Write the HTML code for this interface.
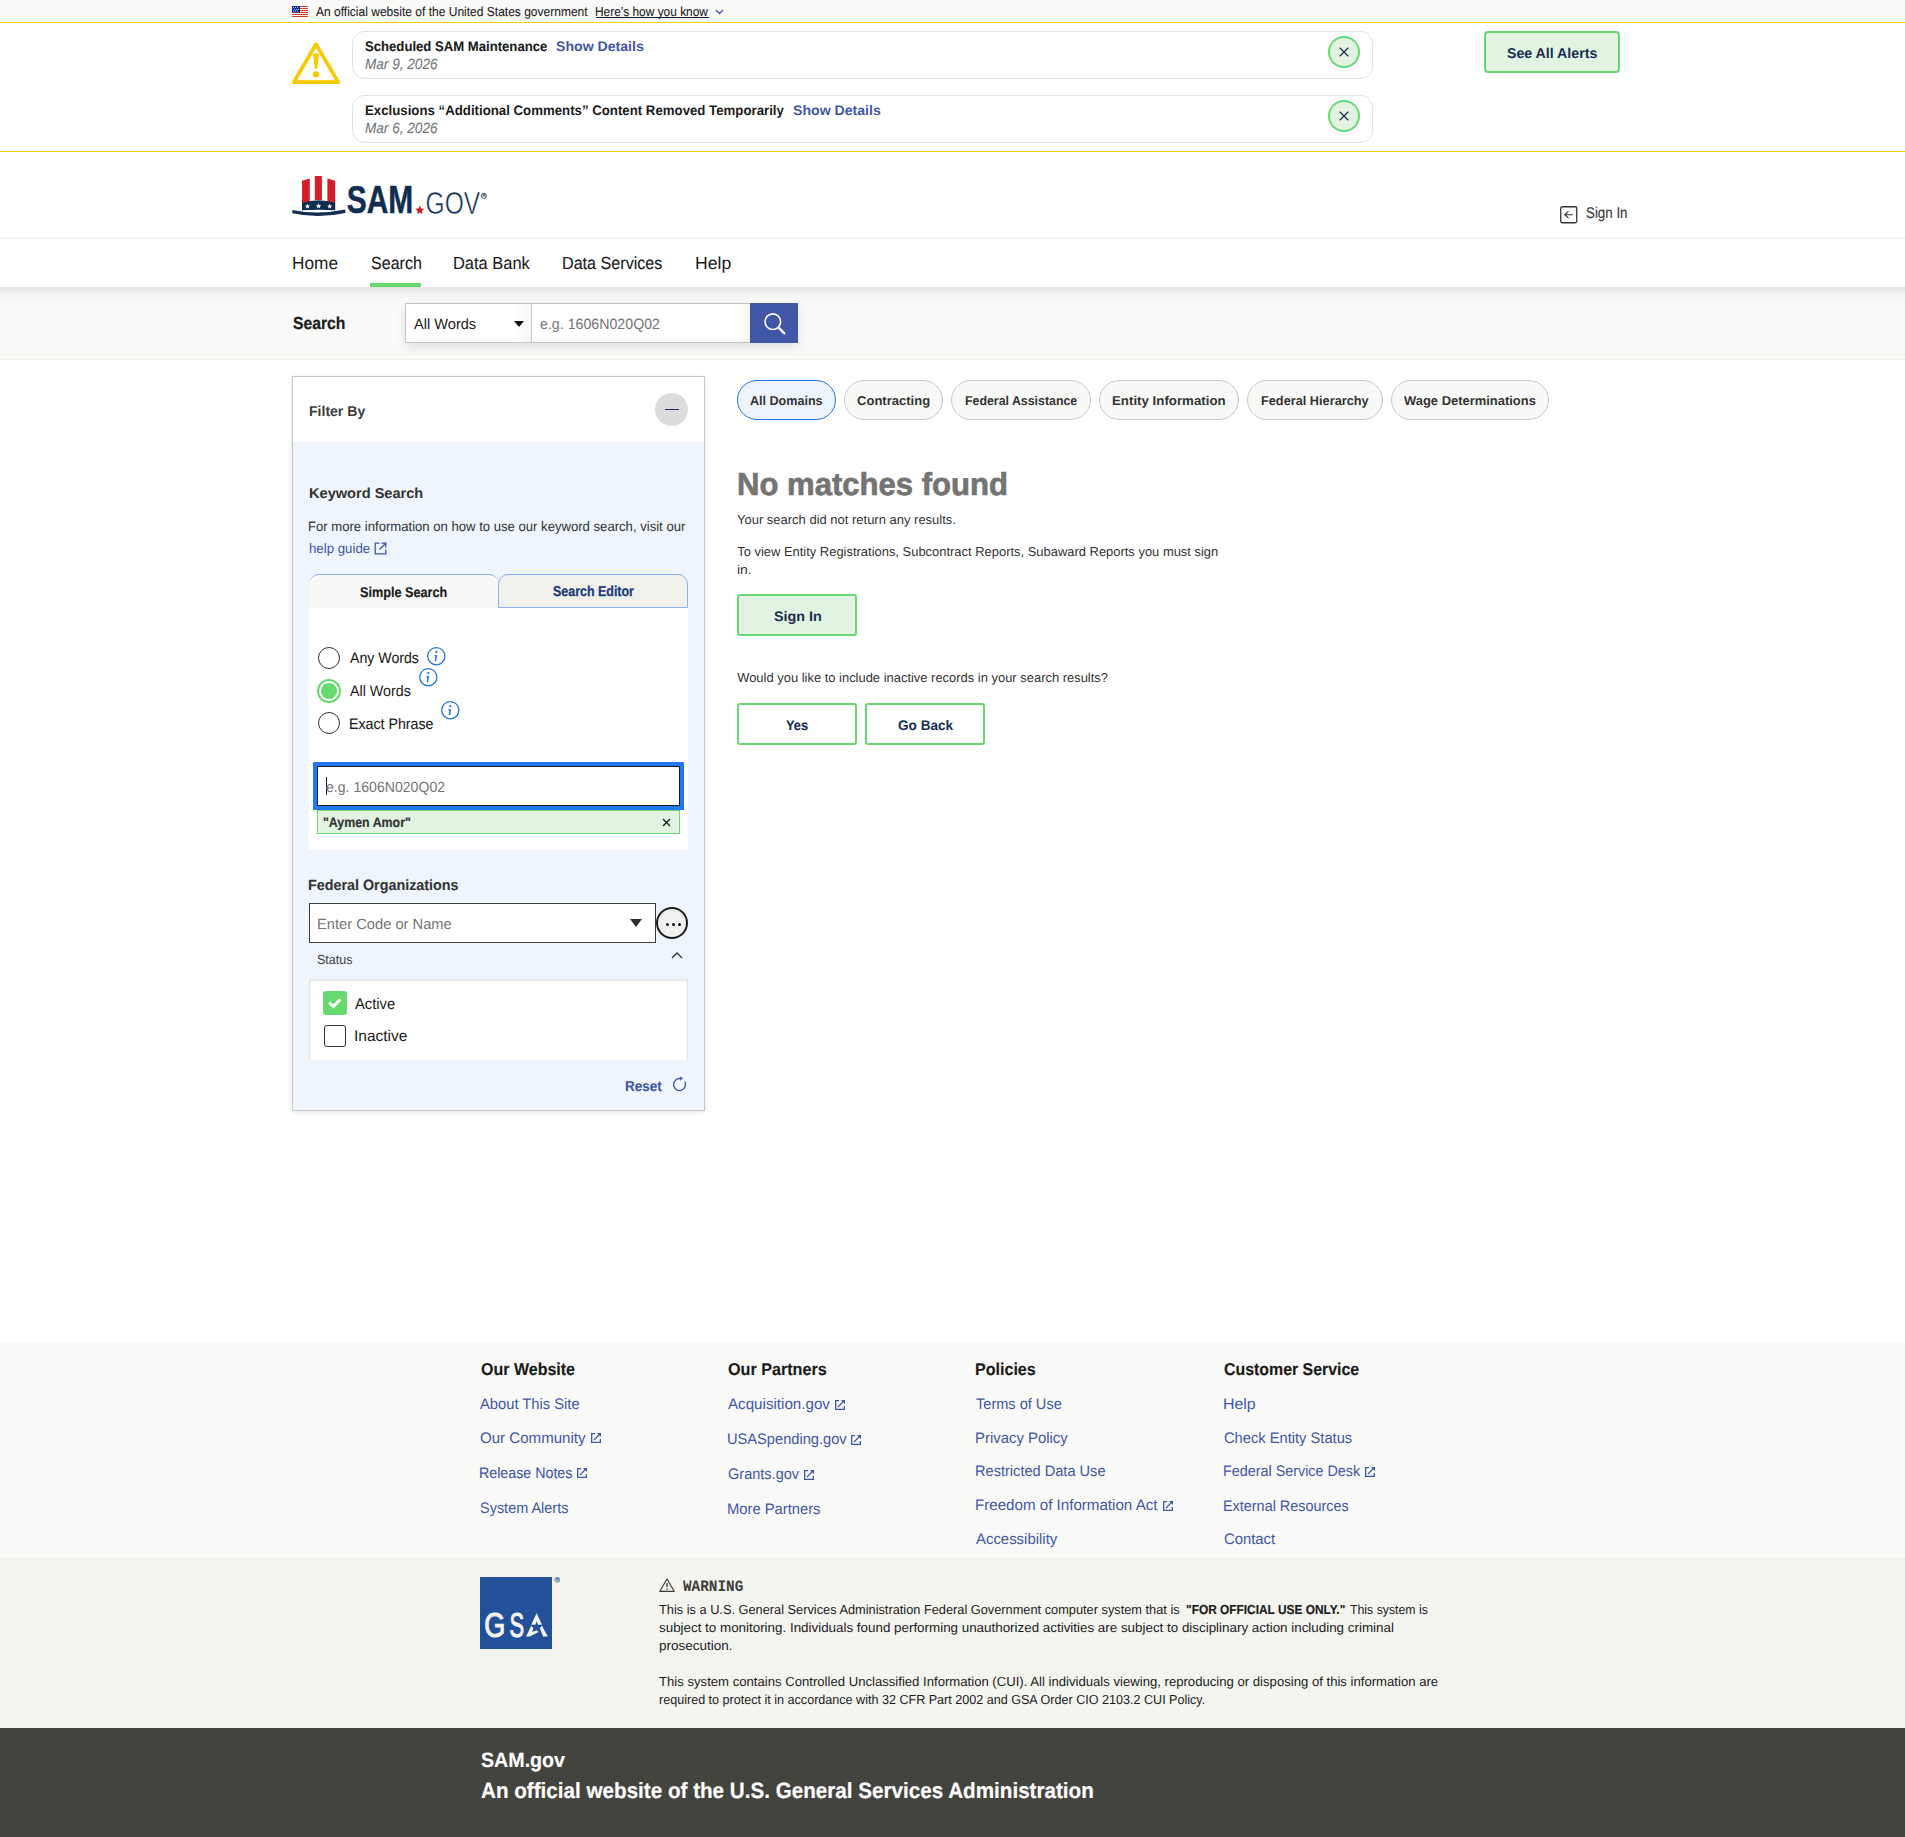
<!DOCTYPE html>
<html lang="en"><head><meta charset="utf-8"><title>SAM.gov | Search</title>
<style>
html,body{margin:0;padding:0;}
body{width:1905px;height:1837px;position:relative;overflow:hidden;background:#fff;font-family:"Liberation Sans", sans-serif;}
.t{position:absolute;white-space:nowrap;line-height:1;transform-origin:0 0;text-rendering:geometricPrecision;}
.r{position:absolute;box-sizing:border-box;}
svg{position:absolute;overflow:visible;}
</style></head><body>
<!-- gov banner -->
<div class="r" style="left:0;top:0;width:1905px;height:22px;background:#f9f9f7"></div>
<div class="r" style="left:0;top:22px;width:1905px;height:1px;background:#fbce00"></div>
<svg style="left:292px;top:6px" width="16" height="11" viewBox="0 0 16 11">
<rect x="0" y="0" width="16" height="11" fill="#fff"/>
<g fill="#d83b1f"><rect x="0" y="0" width="16" height="1"/><rect x="0" y="2" width="16" height="1"/><rect x="0" y="4" width="16" height="1"/><rect x="0" y="6" width="16" height="1"/><rect x="0" y="8" width="16" height="1"/><rect x="0" y="10" width="16" height="1"/></g>
<rect x="0" y="0" width="8" height="6.5" fill="#0b2aa8"/>
<g fill="#fff"><circle cx="1.5" cy="1.5" r=".5"/><circle cx="3.5" cy="1.5" r=".5"/><circle cx="5.5" cy="1.5" r=".5"/><circle cx="2.5" cy="3.2" r=".5"/><circle cx="4.5" cy="3.2" r=".5"/><circle cx="6.5" cy="3.2" r=".5"/><circle cx="1.5" cy="5" r=".5"/><circle cx="3.5" cy="5" r=".5"/><circle cx="5.5" cy="5" r=".5"/></g>
</svg>
<div class="r" style="left:596px;top:17px;width:113px;height:1px;background:#1b1b1b"></div>
<svg style="left:715px;top:9px" width="9" height="6" viewBox="0 0 9 6"><path d="M1 1 L4.5 4.5 L8 1" fill="none" stroke="#3f57a6" stroke-width="1.4"/></svg>

<!-- alerts -->
<div class="r" style="left:0;top:151px;width:1905px;height:1px;background:#fbce00"></div>
<svg style="left:291px;top:41px" width="50" height="44" viewBox="0 0 50 44">
<path d="M25 3.2 L47.2 41.1 L2.8 41.1 Z" fill="none" stroke="#f8c800" stroke-width="3.7" stroke-linejoin="round"/>
<path d="M22.2 13.8 Q22 12.3 23.5 12.3 L26.5 12.3 Q28 12.3 27.8 13.8 L26.4 27.2 Q26.2 28 25 28 Q23.8 28 23.6 27.2 Z" fill="#f8c800"/>
<circle cx="25" cy="33.3" r="3.1" fill="#f8c800"/>
</svg>
<div class="r" style="left:352px;top:31px;width:1021px;height:48px;border:1px solid #e3e3e3;border-radius:12px"></div>
<div class="r" style="left:352px;top:95px;width:1021px;height:48px;border:1px solid #e3e3e3;border-radius:12px"></div>
<div class="r" style="left:1328px;top:36px;width:32px;height:32px;border:2px solid #66d96f;border-radius:50%;background:#e3f3e1"></div>
<div class="r" style="left:1328px;top:100px;width:32px;height:32px;border:2px solid #66d96f;border-radius:50%;background:#e3f3e1"></div>
<svg style="left:1339px;top:47px" width="10" height="10" viewBox="0 0 10 10"><path d="M0.7 0.7 L9.3 9.3 M9.3 0.7 L0.7 9.3" stroke="#162e51" stroke-width="1.25"/></svg>
<svg style="left:1339px;top:111px" width="10" height="10" viewBox="0 0 10 10"><path d="M0.7 0.7 L9.3 9.3 M9.3 0.7 L0.7 9.3" stroke="#162e51" stroke-width="1.25"/></svg>
<div class="r" style="left:1484px;top:31px;width:136px;height:42px;border:2px solid #66d96f;border-radius:4px;background:#e3f3e1"></div>

<!-- header -->
<div class="r" style="left:0;top:238px;width:1905px;height:1px;background:#eeeee9"></div>
<!-- LOGO -->
<svg style="left:292px;top:175px" width="196" height="42" viewBox="0 0 196 42">
<path d="M10 5.8 L17.8 3.6 L17.8 28 L10 28 Z" fill="#d0212b"/>
<path d="M22.8 1 L29.9 1 L29.9 25 L22.8 25 Z" fill="#d0212b"/>
<path d="M35.4 3.6 L43.2 5.8 L43.2 28 L35.4 28 Z" fill="#d0212b"/>
<path d="M10 27.8 Q26.6 22.5 43.2 27.8 L43.2 35.2 Q26.6 34.2 10 35.2 Z" fill="#112e51"/>
<path d="M0.3 35 Q26.6 40.2 53.2 34.6 L53.4 38 Q26.6 44 0.3 38.3 Z" fill="#112e51"/>
<g fill="#fff"><path d="M15.5 28.8 l.75 1.6 1.7.2 -1.25 1.15 .35 1.7 -1.55 -.85 -1.55 .85 .35 -1.7 -1.25 -1.15 1.7 -.2z"/><path d="M26.6 28.3 l.8 1.7 1.8.2 -1.3 1.2 .35 1.8 -1.65 -.9 -1.65 .9 .35 -1.8 -1.3 -1.2 1.8 -.2z"/><path d="M37.7 28.8 l.75 1.6 1.7.2 -1.25 1.15 .35 1.7 -1.55 -.85 -1.55 .85 .35 -1.7 -1.25 -1.15 1.7 -.2z"/></g>
<text x="54.8" y="38.2" font-family="Liberation Sans" font-weight="700" font-size="38.5" fill="#112e51" stroke="#112e51" stroke-width=".5" textLength="66.5" lengthAdjust="spacingAndGlyphs">SAM</text>
<path d="M127.8 30.6 l1.35 2.85 3.1.35 -2.3 2.1 .6 3.1 -2.75 -1.55 -2.75 1.55 .6 -3.1 -2.3 -2.1 3.1 -.35z" fill="#d0212b"/>
<text x="133.6" y="38.6" font-family="Liberation Sans" font-weight="400" font-size="31.3" fill="#112e51" stroke="#fff" stroke-width=".55" textLength="54.6" lengthAdjust="spacingAndGlyphs">GOV</text>
<circle cx="191.8" cy="20.8" r="2.6" fill="none" stroke="#112e51" stroke-width=".8"/>
<text x="190.6" y="22.4" font-family="Liberation Sans" font-weight="700" font-size="4.2" fill="#112e51">R</text>
</svg>
<!-- sign in icon -->
<svg style="left:1560px;top:206px" width="18" height="18" viewBox="0 0 18 18">
<rect x="0.75" y="0.75" width="16" height="16" rx="1.5" fill="none" stroke="#333" stroke-width="1.3"/>
<path d="M12.9 8.7 L4.8 8.7 M8.5 5.1 L4.8 8.7 L8.5 12.2" fill="none" stroke="#333" stroke-width="1.15"/>
</svg>
<!-- nav -->
<div class="r" style="left:0;top:287px;width:1905px;height:73px;background:#f9f9f7"></div>
<div class="r" style="left:0;top:287px;width:1905px;height:15px;background:linear-gradient(rgba(0,0,0,.085),rgba(0,0,0,.035) 35%,rgba(0,0,0,.01) 70%,rgba(0,0,0,0))"></div>
<div class="r" style="left:0;top:359px;width:1905px;height:1px;background:#f2f2ed"></div>
<div class="r" style="left:370px;top:283px;width:51px;height:4px;background:#66d96f"></div>
<!-- search group -->
<div class="r" style="left:405px;top:303px;width:393px;height:40px;box-shadow:0 4px 10px rgba(0,0,0,.10)"></div>
<div class="r" style="left:405px;top:303px;width:346px;height:40px;border:1px solid #c4c4c4;background:#fff"></div>
<div class="r" style="left:531px;top:303px;width:1px;height:40px;background:#c4c4c4"></div>
<div class="r" style="left:515px;top:304px;width:16px;height:38px;background:linear-gradient(90deg,rgba(0,0,0,0),rgba(0,0,0,.045))"></div>
<div class="r" style="left:734px;top:304px;width:16px;height:38px;background:linear-gradient(90deg,rgba(0,0,0,0),rgba(0,0,0,.045))"></div>
<svg style="left:514px;top:321px" width="10" height="6" viewBox="0 0 10 6"><path d="M0 0 L10 0 L5 6 Z" fill="#111"/></svg>
<div class="r" style="left:750px;top:303px;width:48px;height:40px;background:#3f57a6"></div>
<svg style="left:762px;top:311px" width="26" height="26" viewBox="0 0 26 26">
<circle cx="10.8" cy="10.7" r="7.8" fill="none" stroke="#fff" stroke-width="1.6"/>
<path d="M16.6 16.6 L22.3 22.3" stroke="#fff" stroke-width="2.4" stroke-linecap="round"/>
</svg>
<!-- filter panel -->
<div class="r" style="left:292px;top:376px;width:413px;height:735px;border:1px solid #c9c9c9;background:#eef5fc;box-shadow:0 1px 5px rgba(0,0,0,.12)"></div>
<div class="r" style="left:293px;top:377px;width:411px;height:65px;background:#fff"></div>
<div class="r" style="left:655px;top:393px;width:33px;height:33px;border-radius:50%;background:#dcdcdc"></div>
<div class="r" style="left:665px;top:408.5px;width:14px;height:1.4px;background:#162e51"></div>
<!-- help guide icon -->
<svg style="left:374px;top:542px" width="13" height="13" viewBox="0 0 13 13">
<path d="M5.5 1.2 H1.2 V11.8 H11.8 V7.5" fill="none" stroke="#3f57a6" stroke-width="1.3"/>
<path d="M7.5 1.2 H11.8 V5.5 M11.8 1.2 L5.5 7.5" fill="none" stroke="#3f57a6" stroke-width="1.3"/>
</svg>
<!-- tabs -->
<div class="r" style="left:309px;top:574px;width:190px;height:35px;border-top:1px solid #8ab0f0;border-radius:10px 10px 0 0;background:#f8f8f6"></div>
<div class="r" style="left:498px;top:574px;width:190px;height:34px;border:1px solid #8ab0f0;border-radius:10px 10px 0 0;background:#f1f1ec"></div>
<div class="r" style="left:309px;top:608px;width:379px;height:242px;background:#fff"></div>
<!-- radios -->
<div class="r" style="left:318px;top:647px;width:22px;height:22px;border:1.5px solid #333;border-radius:50%;background:#fff"></div>
<div class="r" style="left:317px;top:679px;width:24px;height:24px;border:2px solid #66d96f;border-radius:50%;background:#fff"></div>
<div class="r" style="left:321px;top:683px;width:16px;height:16px;border-radius:50%;background:#66d96f"></div>
<div class="r" style="left:318px;top:712px;width:22px;height:22px;border:1.5px solid #333;border-radius:50%;background:#fff"></div>
<svg style="left:427px;top:647px" width="19" height="19" viewBox="0 0 19 19"><circle cx="9.3" cy="9.2" r="8.6" fill="none" stroke="#2672de" stroke-width="1.3"/><circle cx="9.3" cy="5.1" r="1.15" fill="#2672de"/><path d="M8.1 8.7 L9.3 8.7 L8.6 13.5" fill="none" stroke="#2672de" stroke-width="1.55" stroke-linecap="round" stroke-linejoin="round"/></svg>
<svg style="left:419px;top:668px" width="19" height="19" viewBox="0 0 19 19"><circle cx="9.3" cy="9.2" r="8.6" fill="none" stroke="#2672de" stroke-width="1.3"/><circle cx="9.3" cy="5.1" r="1.15" fill="#2672de"/><path d="M8.1 8.7 L9.3 8.7 L8.6 13.5" fill="none" stroke="#2672de" stroke-width="1.55" stroke-linecap="round" stroke-linejoin="round"/></svg>
<svg style="left:441px;top:701px" width="19" height="19" viewBox="0 0 19 19"><circle cx="9.3" cy="9.2" r="8.6" fill="none" stroke="#2672de" stroke-width="1.3"/><circle cx="9.3" cy="5.1" r="1.15" fill="#2672de"/><path d="M8.1 8.7 L9.3 8.7 L8.6 13.5" fill="none" stroke="#2672de" stroke-width="1.55" stroke-linecap="round" stroke-linejoin="round"/></svg>
<!-- focused input -->
<div class="r" style="left:313px;top:762px;width:371px;height:48px;background:#2378f4"></div>
<div class="r" style="left:317px;top:766px;width:363px;height:40px;border:1.5px solid #1b1b1b;background:#fff"></div>
<div class="r" style="left:326px;top:777px;width:1px;height:18px;background:#1b1b1b"></div>
<!-- chip -->
<div class="r" style="left:317px;top:810px;width:363px;height:24px;border:1px solid #6bd772;background:#e3f3e1"></div>
<svg style="left:662px;top:818px" width="9" height="9" viewBox="0 0 9 9"><path d="M1 1 L8 8 M8 1 L1 8" stroke="#1b1b1b" stroke-width="1.4"/></svg>
<!-- federal org combobox -->
<div class="r" style="left:309px;top:903px;width:347px;height:40px;border:1.5px solid #3d3d38;background:#fff"></div>
<svg style="left:630px;top:919px" width="12" height="8" viewBox="0 0 12 8"><path d="M0 0 L12 0 L6 8 Z" fill="#2d2e2f"/></svg>
<div class="r" style="left:656px;top:907px;width:32px;height:32px;border:2px solid #1b1b1b;border-radius:50%;background:#f0f0f0"></div>
<div class="r" style="left:665.8px;top:922.5px;width:3.4px;height:3.4px;border-radius:50%;background:#111"></div>
<div class="r" style="left:671.6px;top:922.5px;width:3.4px;height:3.4px;border-radius:50%;background:#111"></div>
<div class="r" style="left:677.5px;top:922.5px;width:3.4px;height:3.4px;border-radius:50%;background:#111"></div>
<svg style="left:671px;top:951px" width="12" height="8" viewBox="0 0 12 8"><path d="M1 7 L6 2 L11 7" fill="none" stroke="#333" stroke-width="1.3"/></svg>
<!-- status checkbox area -->
<div class="r" style="left:309px;top:979px;width:379px;height:81px;border:1px solid #e2e2e2;border-bottom:none;background:#fff;box-shadow:inset 0 1px 2px rgba(0,0,0,.10)"></div>
<div class="r" style="left:323px;top:991px;width:24px;height:24px;border-radius:3px;background:#66d96f"></div>
<svg style="left:323px;top:991px" width="24" height="24" viewBox="0 0 24 24"><path d="M6.3 11.7 L10.5 15.5 L17.3 8.3" fill="none" stroke="#fff" stroke-width="2.9"/></svg>
<div class="r" style="left:324px;top:1025px;width:22px;height:22px;border:1.5px solid #333;border-radius:3px;background:#fff"></div>
<!-- reset icon -->
<svg style="left:671px;top:1076px" width="16" height="16" viewBox="0 0 16 16">
<path d="M9.4 2.6 A6 6 0 1 0 13.8 5.6" fill="none" stroke="#3f57a6" stroke-width="1.35"/>
<path d="M9.2 0.2 L11.9 2.5 L9.2 4.8 Z" fill="#3f57a6"/>
</svg>
<!-- domain pills -->
<div class="r" style="left:737px;top:380px;width:99px;height:40px;border:1px solid #2672de;border-radius:20px;background:#edf4fc"></div>
<div class="r" style="left:844px;top:380px;width:99px;height:40px;border:1px solid #c9c9c9;border-radius:20px;background:#f8f8f6"></div>
<div class="r" style="left:951px;top:380px;width:140px;height:40px;border:1px solid #c9c9c9;border-radius:20px;background:#f8f8f6"></div>
<div class="r" style="left:1099px;top:380px;width:140px;height:40px;border:1px solid #c9c9c9;border-radius:20px;background:#f8f8f6"></div>
<div class="r" style="left:1247px;top:380px;width:136px;height:40px;border:1px solid #c9c9c9;border-radius:20px;background:#f8f8f6"></div>
<div class="r" style="left:1391px;top:380px;width:158px;height:40px;border:1px solid #c9c9c9;border-radius:20px;background:#f8f8f6"></div>
<!-- buttons -->
<div class="r" style="left:737px;top:594px;width:120px;height:42px;border:2px solid #66d96f;border-radius:3px;background:#e3f3e1"></div>
<div class="r" style="left:737px;top:703px;width:120px;height:42px;border:2px solid #66d96f;border-radius:3px;background:#fff"></div>
<div class="r" style="left:865px;top:703px;width:120px;height:42px;border:2px solid #66d96f;border-radius:3px;background:#fff"></div>
<!-- footer -->
<div class="r" style="left:0;top:1343px;width:1905px;height:214px;background:#f9f9f7"></div>
<div class="r" style="left:0;top:1557px;width:1905px;height:171px;background:#f4f4ef"></div>
<div class="r" style="left:0;top:1728px;width:1905px;height:109px;background:#44443f"></div>
<!-- ext icons -->
<svg style="left:590.9px;top:1432.9px" width="10" height="10" viewBox="0 0 10 10"><path d="M4 0.65 H0.65 V9.35 H9.35 V6" fill="none" stroke="#3f57a6" stroke-width="1.3"/><path d="M2.9 7.1 L8.2 1.8" stroke="#3f57a6" stroke-width="1.3"/><path d="M5.9 0 H10 V4.1 Z" fill="#3f57a6"/></svg>
<svg style="left:577.1px;top:1467.7px" width="10" height="10" viewBox="0 0 10 10"><path d="M4 0.65 H0.65 V9.35 H9.35 V6" fill="none" stroke="#3f57a6" stroke-width="1.3"/><path d="M2.9 7.1 L8.2 1.8" stroke="#3f57a6" stroke-width="1.3"/><path d="M5.9 0 H10 V4.1 Z" fill="#3f57a6"/></svg>
<svg style="left:835.1px;top:1400.3px" width="10" height="10" viewBox="0 0 10 10"><path d="M4 0.65 H0.65 V9.35 H9.35 V6" fill="none" stroke="#3f57a6" stroke-width="1.3"/><path d="M2.9 7.1 L8.2 1.8" stroke="#3f57a6" stroke-width="1.3"/><path d="M5.9 0 H10 V4.1 Z" fill="#3f57a6"/></svg>
<svg style="left:851.3px;top:1435.2px" width="10" height="10" viewBox="0 0 10 10"><path d="M4 0.65 H0.65 V9.35 H9.35 V6" fill="none" stroke="#3f57a6" stroke-width="1.3"/><path d="M2.9 7.1 L8.2 1.8" stroke="#3f57a6" stroke-width="1.3"/><path d="M5.9 0 H10 V4.1 Z" fill="#3f57a6"/></svg>
<svg style="left:804.0px;top:1470.3px" width="10" height="10" viewBox="0 0 10 10"><path d="M4 0.65 H0.65 V9.35 H9.35 V6" fill="none" stroke="#3f57a6" stroke-width="1.3"/><path d="M2.9 7.1 L8.2 1.8" stroke="#3f57a6" stroke-width="1.3"/><path d="M5.9 0 H10 V4.1 Z" fill="#3f57a6"/></svg>
<svg style="left:1162.8px;top:1501.0px" width="10" height="10" viewBox="0 0 10 10"><path d="M4 0.65 H0.65 V9.35 H9.35 V6" fill="none" stroke="#3f57a6" stroke-width="1.3"/><path d="M2.9 7.1 L8.2 1.8" stroke="#3f57a6" stroke-width="1.3"/><path d="M5.9 0 H10 V4.1 Z" fill="#3f57a6"/></svg>
<svg style="left:1364.6px;top:1466.6px" width="10" height="10" viewBox="0 0 10 10"><path d="M4 0.65 H0.65 V9.35 H9.35 V6" fill="none" stroke="#3f57a6" stroke-width="1.3"/><path d="M2.9 7.1 L8.2 1.8" stroke="#3f57a6" stroke-width="1.3"/><path d="M5.9 0 H10 V4.1 Z" fill="#3f57a6"/></svg>
<!-- GSA logo -->
<svg style="left:480px;top:1577px" width="82" height="72" viewBox="0 0 82 72">
<rect x="0" y="0" width="72" height="72" fill="#22519a"/>
<text x="4.3" y="59.9" font-family="Liberation Sans" font-size="35" fill="#f4f4ef" stroke="#f4f4ef" stroke-width="1.1" textLength="21" lengthAdjust="spacingAndGlyphs">G</text><text x="29.6" y="59.9" font-family="Liberation Sans" font-size="35" fill="#f4f4ef" stroke="#f4f4ef" stroke-width="1.1" textLength="14.6" lengthAdjust="spacingAndGlyphs">S</text>
<path fill="#f4f4ef" d="M56.63 36 L62 47.67 L57.93 47.67 L56.63 44.33 L55.33 47.67 L51.26 47.67 Z M62 48.78 L67.74 59.6 L63.11 59.6 L59.78 51.19 Z M51.26 48.78 L53.48 51.19 L52 54.89 L56.63 53.22 L58.67 54.89 L49.8 59.6 L46.07 59.6 Z"/>
<circle cx="77.2" cy="2.8" r="2.4" fill="none" stroke="#22519a" stroke-width=".7"/>
<text x="76.1" y="4.3" font-family="Liberation Sans" font-weight="700" font-size="3.8" fill="#22519a">R</text>
</svg>
<!-- warning icon -->
<svg style="left:659px;top:1578px" width="16" height="14" viewBox="0 0 16 14">
<path d="M8 1 L15.2 13.3 L0.8 13.3 Z" fill="none" stroke="#3d3d3d" stroke-width="1.2" stroke-linejoin="round"/>
<path d="M8 5 L8 9.3" stroke="#3d3d3d" stroke-width="1.4"/>
<circle cx="8" cy="11.2" r=".8" fill="#3d3d3d"/>
</svg>
<div class="t" style="left:316.00px;top:6.00px;font-size:12.97px;font-weight:400;font-style:normal;color:#1b1b1b;font-family:'Liberation Sans', sans-serif;transform:scaleX(0.9266);-webkit-text-stroke:0.08px #1b1b1b;">An official website of the United States government</div>
<div class="t" style="left:595.48px;top:6.00px;font-size:12.97px;font-weight:400;font-style:normal;color:#1b1b1b;font-family:'Liberation Sans', sans-serif;transform:scaleX(0.9180);-webkit-text-stroke:0.09px #1b1b1b;">Here’s how you know</div>
<div class="t" style="left:365.30px;top:40.00px;font-size:13.81px;font-weight:700;font-style:normal;color:#1b1b1b;font-family:'Liberation Sans', sans-serif;transform:scaleX(0.9511);-webkit-text-stroke:0.09px #1b1b1b;">Scheduled SAM Maintenance</div>
<div class="t" style="left:556.20px;top:40.00px;font-size:13.81px;font-weight:700;font-style:normal;color:#3f57a6;font-family:'Liberation Sans', sans-serif;transform:scaleX(1.0221);">Show Details</div>
<div class="t" style="left:365.30px;top:58.00px;font-size:14.8px;font-weight:400;font-style:italic;color:#71767a;font-family:'Liberation Sans', sans-serif;transform:scaleX(0.9181);-webkit-text-stroke:0.10px #71767a;">Mar 9, 2026</div>
<div class="t" style="left:365.30px;top:104.00px;font-size:13.81px;font-weight:700;font-style:normal;color:#1b1b1b;font-family:'Liberation Sans', sans-serif;transform:scaleX(0.9592);">Exclusions “Additional Comments” Content Removed Temporarily</div>
<div class="t" style="left:792.80px;top:104.00px;font-size:13.81px;font-weight:700;font-style:normal;color:#3f57a6;font-family:'Liberation Sans', sans-serif;transform:scaleX(1.0221);">Show Details</div>
<div class="t" style="left:365.30px;top:122.00px;font-size:14.8px;font-weight:400;font-style:italic;color:#71767a;font-family:'Liberation Sans', sans-serif;transform:scaleX(0.9181);-webkit-text-stroke:0.10px #71767a;">Mar 6, 2026</div>
<div class="t" style="left:1506.60px;top:47.00px;font-size:14.22px;font-weight:700;font-style:normal;color:#162e51;font-family:'Liberation Sans', sans-serif;transform:scaleX(0.9960);">See All Alerts</div>
<div class="t" style="left:1586.00px;top:206.00px;font-size:15.51px;font-weight:400;font-style:normal;color:#3d3d3d;font-family:'Liberation Sans', sans-serif;transform:scaleX(0.8607);-webkit-text-stroke:0.18px #3d3d3d;">Sign In</div>
<div class="t" style="left:291.71px;top:255.00px;font-size:17.44px;font-weight:400;font-style:normal;color:#1b1b1b;font-family:'Liberation Sans', sans-serif;transform:scaleX(0.9885);">Home</div>
<div class="t" style="left:370.50px;top:255.00px;font-size:17.44px;font-weight:400;font-style:normal;color:#1b1b1b;font-family:'Liberation Sans', sans-serif;transform:scaleX(0.9202);-webkit-text-stroke:0.12px #1b1b1b;">Search</div>
<div class="t" style="left:453.16px;top:255.00px;font-size:17.44px;font-weight:400;font-style:normal;color:#1b1b1b;font-family:'Liberation Sans', sans-serif;transform:scaleX(0.9429);-webkit-text-stroke:0.08px #1b1b1b;">Data Bank</div>
<div class="t" style="left:562.38px;top:255.00px;font-size:17.44px;font-weight:400;font-style:normal;color:#1b1b1b;font-family:'Liberation Sans', sans-serif;transform:scaleX(0.9247);-webkit-text-stroke:0.11px #1b1b1b;">Data Services</div>
<div class="t" style="left:695.09px;top:255.00px;font-size:17.44px;font-weight:400;font-style:normal;color:#1b1b1b;font-family:'Liberation Sans', sans-serif;transform:scaleX(1.0098);">Help</div>
<div class="t" style="left:292.60px;top:315.00px;font-size:17.4px;font-weight:700;font-style:normal;color:#1b1b1b;font-family:'Liberation Sans', sans-serif;transform:scaleX(0.9027);-webkit-text-stroke:0.24px #1b1b1b;">Search</div>
<div class="t" style="left:414.30px;top:318.00px;font-size:14.95px;font-weight:400;font-style:normal;color:#1b1b1b;font-family:'Liberation Sans', sans-serif;transform:scaleX(0.9768);">All Words</div>
<div class="t" style="left:540.00px;top:318.00px;font-size:14.95px;font-weight:400;font-style:normal;color:#757575;font-family:'Liberation Sans', sans-serif;transform:scaleX(0.9505);">e.g. 1606N020Q02</div>
<div class="t" style="left:309.30px;top:405.00px;font-size:14.36px;font-weight:700;font-style:normal;color:#3d3d3d;font-family:'Liberation Sans', sans-serif;transform:scaleX(0.9780);">Filter By</div>
<div class="t" style="left:309.00px;top:487.00px;font-size:14.36px;font-weight:700;font-style:normal;color:#333;font-family:'Liberation Sans', sans-serif;transform:scaleX(1.0156);">Keyword Search</div>
<div class="t" style="left:308.04px;top:520.00px;font-size:13.68px;font-weight:400;font-style:normal;color:#333;font-family:'Liberation Sans', sans-serif;transform:scaleX(0.9586);">For more information on how to use our keyword search, visit our</div>
<div class="t" style="left:309.00px;top:542.00px;font-size:13.68px;font-weight:400;font-style:normal;color:#3f57a6;font-family:'Liberation Sans', sans-serif;transform:scaleX(0.9697);">help guide</div>
<div class="t" style="left:359.70px;top:585.00px;font-size:14.08px;font-weight:700;font-style:normal;color:#1b1b1b;font-family:'Liberation Sans', sans-serif;transform:scaleX(0.8981);-webkit-text-stroke:0.20px #1b1b1b;">Simple Search</div>
<div class="t" style="left:552.50px;top:585.00px;font-size:14.36px;font-weight:700;font-style:normal;color:#1a3b7a;font-family:'Liberation Sans', sans-serif;transform:scaleX(0.8670);-webkit-text-stroke:0.27px #1a3b7a;">Search Editor</div>
<div class="t" style="left:350.00px;top:651.00px;font-size:15.23px;font-weight:400;font-style:normal;color:#1b1b1b;font-family:'Liberation Sans', sans-serif;transform:scaleX(0.9297);-webkit-text-stroke:0.09px #1b1b1b;">Any Words</div>
<div class="t" style="left:350.00px;top:684.00px;font-size:15.23px;font-weight:400;font-style:normal;color:#1b1b1b;font-family:'Liberation Sans', sans-serif;transform:scaleX(0.9383);">All Words</div>
<div class="t" style="left:349.07px;top:717.00px;font-size:15.23px;font-weight:400;font-style:normal;color:#1b1b1b;font-family:'Liberation Sans', sans-serif;transform:scaleX(0.9332);-webkit-text-stroke:0.09px #1b1b1b;">Exact Phrase</div>
<div class="t" style="left:326.20px;top:781.00px;font-size:14.66px;font-weight:400;font-style:normal;color:#757575;font-family:'Liberation Sans', sans-serif;transform:scaleX(0.9611);">e.g. 1606N020Q02</div>
<div class="t" style="left:323.40px;top:816.00px;font-size:13.81px;font-weight:700;font-style:normal;color:#333;font-family:'Liberation Sans', sans-serif;transform:scaleX(0.8969);-webkit-text-stroke:0.20px #333;">"Aymen Amor"</div>
<div class="t" style="left:308.04px;top:879.00px;font-size:14.91px;font-weight:700;font-style:normal;color:#333;font-family:'Liberation Sans', sans-serif;transform:scaleX(0.9616);-webkit-text-stroke:0.08px #333;">Federal Organizations</div>
<div class="t" style="left:317.11px;top:918.00px;font-size:14.8px;font-weight:400;font-style:normal;color:#757575;font-family:'Liberation Sans', sans-serif;transform:scaleX(0.9928);">Enter Code or Name</div>
<div class="t" style="left:317.40px;top:953.00px;font-size:13.11px;font-weight:400;font-style:normal;color:#3d3d3d;font-family:'Liberation Sans', sans-serif;transform:scaleX(0.9519);">Status</div>
<div class="t" style="left:355.40px;top:997.00px;font-size:15.51px;font-weight:400;font-style:normal;color:#1b1b1b;font-family:'Liberation Sans', sans-serif;transform:scaleX(0.9522);">Active</div>
<div class="t" style="left:354.40px;top:1029.00px;font-size:15.51px;font-weight:400;font-style:normal;color:#1b1b1b;font-family:'Liberation Sans', sans-serif;transform:scaleX(0.9962);">Inactive</div>
<div class="t" style="left:625.30px;top:1080.00px;font-size:14.36px;font-weight:700;font-style:normal;color:#3f57a6;font-family:'Liberation Sans', sans-serif;transform:scaleX(0.9383);-webkit-text-stroke:0.12px #3f57a6;">Reset</div>
<div class="t" style="left:750.40px;top:395.00px;font-size:12.84px;font-weight:700;font-style:normal;color:#333;font-family:'Liberation Sans', sans-serif;transform:scaleX(0.9784);">All Domains</div>
<div class="t" style="left:857.40px;top:395.00px;font-size:12.84px;font-weight:700;font-style:normal;color:#333;font-family:'Liberation Sans', sans-serif;transform:scaleX(1.0163);">Contracting</div>
<div class="t" style="left:964.50px;top:395.00px;font-size:12.84px;font-weight:700;font-style:normal;color:#333;font-family:'Liberation Sans', sans-serif;transform:scaleX(0.9632);">Federal Assistance</div>
<div class="t" style="left:1111.80px;top:395.00px;font-size:12.84px;font-weight:700;font-style:normal;color:#333;font-family:'Liberation Sans', sans-serif;transform:scaleX(1.0354);">Entity Information</div>
<div class="t" style="left:1260.80px;top:395.00px;font-size:12.84px;font-weight:700;font-style:normal;color:#333;font-family:'Liberation Sans', sans-serif;transform:scaleX(0.9932);">Federal Hierarchy</div>
<div class="t" style="left:1403.60px;top:395.00px;font-size:12.84px;font-weight:700;font-style:normal;color:#333;font-family:'Liberation Sans', sans-serif;transform:scaleX(1.0088);">Wage Determinations</div>
<div class="t" style="left:737.14px;top:469.00px;font-size:31.74px;font-weight:700;font-style:normal;color:#747474;font-family:'Liberation Sans', sans-serif;transform:scaleX(0.9787);-webkit-text-stroke:0.09px #747474;-webkit-text-stroke:0.7px #747474;">No matches found</div>
<div class="t" style="left:737.20px;top:514.00px;font-size:12.94px;font-weight:400;font-style:normal;color:#333;font-family:'Liberation Sans', sans-serif;transform:scaleX(1.0035);">Your search did not return any results.</div>
<div class="t" style="left:737.20px;top:546.00px;font-size:12.94px;font-weight:400;font-style:normal;color:#333;font-family:'Liberation Sans', sans-serif;">To view Entity Registrations, Subcontract Reports, Subaward Reports you must sign</div>
<div class="t" style="left:737.20px;top:564.00px;font-size:12.94px;font-weight:400;font-style:normal;color:#333;font-family:'Liberation Sans', sans-serif;transform:scaleX(1.0788);">in.</div>
<div class="t" style="left:773.70px;top:610.00px;font-size:13.81px;font-weight:700;font-style:normal;color:#162e51;font-family:'Liberation Sans', sans-serif;transform:scaleX(1.0404);">Sign In</div>
<div class="t" style="left:737.20px;top:672.00px;font-size:12.94px;font-weight:400;font-style:normal;color:#333;font-family:'Liberation Sans', sans-serif;">Would you like to include inactive records in your search results?</div>
<div class="t" style="left:786.40px;top:719.00px;font-size:13.81px;font-weight:700;font-style:normal;color:#162e51;font-family:'Liberation Sans', sans-serif;transform:scaleX(0.9248);-webkit-text-stroke:0.15px #162e51;">Yes</div>
<div class="t" style="left:897.70px;top:719.00px;font-size:13.81px;font-weight:700;font-style:normal;color:#162e51;font-family:'Liberation Sans', sans-serif;transform:scaleX(0.9857);">Go Back</div>
<div class="t" style="left:480.50px;top:1361.00px;font-size:17.15px;font-weight:700;font-style:normal;color:#1b1b1b;font-family:'Liberation Sans', sans-serif;transform:scaleX(0.9340);-webkit-text-stroke:0.16px #1b1b1b;">Our Website</div>
<div class="t" style="left:728.30px;top:1361.00px;font-size:17.15px;font-weight:700;font-style:normal;color:#1b1b1b;font-family:'Liberation Sans', sans-serif;transform:scaleX(0.9419);-webkit-text-stroke:0.14px #1b1b1b;">Our Partners</div>
<div class="t" style="left:975.26px;top:1361.00px;font-size:17.15px;font-weight:700;font-style:normal;color:#1b1b1b;font-family:'Liberation Sans', sans-serif;transform:scaleX(0.9375);-webkit-text-stroke:0.15px #1b1b1b;">Policies</div>
<div class="t" style="left:1224.40px;top:1361.00px;font-size:17.15px;font-weight:700;font-style:normal;color:#1b1b1b;font-family:'Liberation Sans', sans-serif;transform:scaleX(0.9268);-webkit-text-stroke:0.18px #1b1b1b;">Customer Service</div>
<div class="t" style="left:480.20px;top:1397.00px;font-size:15.26px;font-weight:400;font-style:normal;color:#3f57a6;font-family:'Liberation Sans', sans-serif;transform:scaleX(0.9657);">About This Site</div>
<div class="t" style="left:480.20px;top:1431.00px;font-size:15.26px;font-weight:400;font-style:normal;color:#3f57a6;font-family:'Liberation Sans', sans-serif;transform:scaleX(0.9884);">Our Community</div>
<div class="t" style="left:479.27px;top:1466.00px;font-size:15.26px;font-weight:400;font-style:normal;color:#3f57a6;font-family:'Liberation Sans', sans-serif;transform:scaleX(0.9336);-webkit-text-stroke:0.09px #3f57a6;">Release Notes</div>
<div class="t" style="left:480.20px;top:1501.00px;font-size:15.26px;font-weight:400;font-style:normal;color:#3f57a6;font-family:'Liberation Sans', sans-serif;transform:scaleX(0.9488);">System Alerts</div>
<div class="t" style="left:728.00px;top:1397.00px;font-size:15.26px;font-weight:400;font-style:normal;color:#3f57a6;font-family:'Liberation Sans', sans-serif;transform:scaleX(0.9937);">Acquisition.gov</div>
<div class="t" style="left:727.04px;top:1432.00px;font-size:15.26px;font-weight:400;font-style:normal;color:#3f57a6;font-family:'Liberation Sans', sans-serif;transform:scaleX(0.9597);">USASpending.gov</div>
<div class="t" style="left:728.00px;top:1467.00px;font-size:15.26px;font-weight:400;font-style:normal;color:#3f57a6;font-family:'Liberation Sans', sans-serif;transform:scaleX(0.9525);">Grants.gov</div>
<div class="t" style="left:727.03px;top:1502.00px;font-size:15.26px;font-weight:400;font-style:normal;color:#3f57a6;font-family:'Liberation Sans', sans-serif;transform:scaleX(0.9668);">More Partners</div>
<div class="t" style="left:975.90px;top:1397.00px;font-size:15.26px;font-weight:400;font-style:normal;color:#3f57a6;font-family:'Liberation Sans', sans-serif;transform:scaleX(0.9548);">Terms of Use</div>
<div class="t" style="left:974.92px;top:1431.00px;font-size:15.26px;font-weight:400;font-style:normal;color:#3f57a6;font-family:'Liberation Sans', sans-serif;transform:scaleX(0.9768);">Privacy Policy</div>
<div class="t" style="left:974.94px;top:1464.00px;font-size:15.26px;font-weight:400;font-style:normal;color:#3f57a6;font-family:'Liberation Sans', sans-serif;transform:scaleX(0.9565);">Restricted Data Use</div>
<div class="t" style="left:974.91px;top:1498.00px;font-size:15.26px;font-weight:400;font-style:normal;color:#3f57a6;font-family:'Liberation Sans', sans-serif;transform:scaleX(0.9922);">Freedom of Information Act</div>
<div class="t" style="left:975.90px;top:1532.00px;font-size:15.26px;font-weight:400;font-style:normal;color:#3f57a6;font-family:'Liberation Sans', sans-serif;transform:scaleX(0.9781);">Accessibility</div>
<div class="t" style="left:1223.06px;top:1397.00px;font-size:15.26px;font-weight:400;font-style:normal;color:#3f57a6;font-family:'Liberation Sans', sans-serif;transform:scaleX(1.0407);">Help</div>
<div class="t" style="left:1224.10px;top:1431.00px;font-size:15.26px;font-weight:400;font-style:normal;color:#3f57a6;font-family:'Liberation Sans', sans-serif;transform:scaleX(0.9629);">Check Entity Status</div>
<div class="t" style="left:1223.16px;top:1464.00px;font-size:15.26px;font-weight:400;font-style:normal;color:#3f57a6;font-family:'Liberation Sans', sans-serif;transform:scaleX(0.9411);">Federal Service Desk</div>
<div class="t" style="left:1223.16px;top:1499.00px;font-size:15.26px;font-weight:400;font-style:normal;color:#3f57a6;font-family:'Liberation Sans', sans-serif;transform:scaleX(0.9445);">External Resources</div>
<div class="t" style="left:1224.10px;top:1532.00px;font-size:15.26px;font-weight:400;font-style:normal;color:#3f57a6;font-family:'Liberation Sans', sans-serif;transform:scaleX(0.9734);">Contact</div>
<div class="t" style="left:683.10px;top:1580.00px;font-size:15.86px;font-weight:700;font-style:normal;color:#3d3d3d;font-family:'Liberation Mono', monospace;transform:scaleX(0.9062);">WARNING</div>
<div class="t" style="left:659.00px;top:1603.00px;font-size:13.08px;font-weight:400;font-style:normal;color:#1b1b1b;font-family:'Liberation Sans', sans-serif;transform:scaleX(0.9772);">This is a U.S. General Services Administration Federal Government computer system that is</div>
<div class="t" style="left:1186.00px;top:1603.00px;font-size:13.08px;font-weight:700;font-style:normal;color:#1b1b1b;font-family:'Liberation Sans', sans-serif;transform:scaleX(0.9092);-webkit-text-stroke:0.17px #1b1b1b;">"FOR OFFICIAL USE ONLY."</div>
<div class="t" style="left:1350.20px;top:1603.00px;font-size:13.08px;font-weight:400;font-style:normal;color:#1b1b1b;font-family:'Liberation Sans', sans-serif;transform:scaleX(0.9400);">This system is</div>
<div class="t" style="left:659.00px;top:1621.00px;font-size:13.08px;font-weight:400;font-style:normal;color:#1b1b1b;font-family:'Liberation Sans', sans-serif;transform:scaleX(1.0232);">subject to monitoring. Individuals found performing unauthorized activities are subject to disciplinary action including criminal</div>
<div class="t" style="left:659.00px;top:1639.00px;font-size:13.08px;font-weight:400;font-style:normal;color:#1b1b1b;font-family:'Liberation Sans', sans-serif;transform:scaleX(1.0324);">prosecution.</div>
<div class="t" style="left:659.00px;top:1675.00px;font-size:13.08px;font-weight:400;font-style:normal;color:#1b1b1b;font-family:'Liberation Sans', sans-serif;transform:scaleX(1.0036);">This system contains Controlled Unclassified Information (CUI). All individuals viewing, reproducing or disposing of this information are</div>
<div class="t" style="left:659.00px;top:1693.00px;font-size:13.08px;font-weight:400;font-style:normal;color:#1b1b1b;font-family:'Liberation Sans', sans-serif;transform:scaleX(0.9613);">required to protect it in accordance with 32 CFR Part 2002 and GSA Order CIO 2103.2 CUI Policy.</div>
<div class="t" style="left:480.90px;top:1751.00px;font-size:20.71px;font-weight:700;font-style:normal;color:#fff;font-family:'Liberation Sans', sans-serif;transform:scaleX(0.9489);-webkit-text-stroke:0.15px #fff;">SAM.gov</div>
<div class="t" style="left:480.90px;top:1780.00px;font-size:22.09px;font-weight:700;font-style:normal;color:#fff;font-family:'Liberation Sans', sans-serif;transform:scaleX(0.9348);-webkit-text-stroke:0.20px #fff;">An official website of the U.S. General Services Administration</div>
</body></html>
